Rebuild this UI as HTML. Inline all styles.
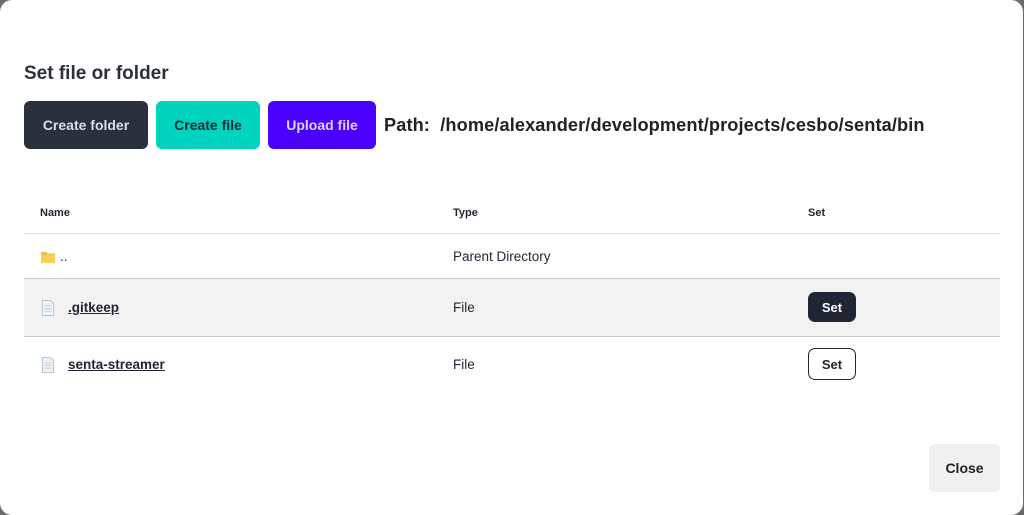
<!DOCTYPE html>
<html><head><style>
html,body{margin:0;padding:0;width:1024px;height:515px;background:#6b6b6b;overflow:hidden;font-family:"Liberation Sans",sans-serif;color:#1f2533}
.m{position:absolute;left:0;top:0;width:1023px;height:515px;background:#fff;border-radius:12px}
.t{position:absolute;left:24px;top:63px;font-size:19px;font-weight:bold;color:#2a2f3a}
.b{position:absolute;top:101px;height:48px;border-radius:6px;font-size:14px;font-weight:bold;display:flex;align-items:center;justify-content:center}
.p{position:absolute;left:384px;top:115px;font-size:18.2px;font-weight:bold;color:#222;white-space:nowrap;letter-spacing:0.1px}
.h{position:absolute;top:207px;font-size:11px;font-weight:bold}
.line{position:absolute;left:24px;width:976px;height:1px;background:#ddd}
.c{position:absolute;font-size:13.5px}
.u{position:absolute;left:68px;text-decoration:underline;font-weight:bold;white-space:nowrap}
.ic{position:absolute;left:40px}
.set{position:absolute;left:808px;width:48px;height:30px;border-radius:7px;font-size:13px;font-weight:bold;display:flex;align-items:center;justify-content:center}
</style></head><body>
<div class="m">
<div class="t">Set file or folder</div>
<div class="b" style="left:24px;width:124px;background:#2a303c;color:#dde;">Create folder</div>
<div class="b" style="left:156px;width:104px;background:#00d4bf;color:#0b2a33;">Create file</div>
<div class="b" style="left:268px;width:108px;background:#4a00ff;color:#ddd3ff;">Upload file</div>
<div class="p">Path:&nbsp; /home/alexander/development/projects/cesbo/senta/bin</div>
<div class="h" style="left:40px">Name</div>
<div class="h" style="left:453px">Type</div>
<div class="h" style="left:808px">Set</div>
<div class="line" style="top:233px"></div>
<svg class="ic" style="top:250px" width="16" height="14" viewBox="0 0 16 14"><path d="M1 2h5l1.5 1.5H15v9.5H1z" fill="#f0c040"/><path d="M1 5h14v8H1z" fill="#f7d25a"/></svg>
<div class="c" style="left:60px;top:249px">..</div>
<div class="c" style="left:453px;top:249px">Parent Directory</div>
<div style="position:absolute;left:24px;top:278px;width:976px;height:57px;background:#f2f2f2;border-top:1px solid #ccc;border-bottom:1px solid #ccc"></div>
<svg class="ic" style="top:300px" width="16" height="16" viewBox="0 0 16 16"><path d="M2.5 .5h8l3 3v12h-11z" fill="#eef3f8" stroke="#b8c6d4"/><path d="M5 6h6M5 8.5h6M5 11h6" stroke="#c3cfdb"/></svg>
<div class="c u" style="top:300px">.gitkeep</div>
<div class="c" style="left:453px;top:300px">File</div>
<div class="set" style="top:292px;background:#1f2533;color:#fff">Set</div>
<svg class="ic" style="top:357px" width="16" height="16" viewBox="0 0 16 16"><path d="M2.5 .5h8l3 3v12h-11z" fill="#eef3f8" stroke="#b8c6d4"/><path d="M5 6h6M5 8.5h6M5 11h6" stroke="#c3cfdb"/></svg>
<div class="c u" style="top:357px">senta-streamer</div>
<div class="c" style="left:453px;top:357px">File</div>
<div class="set" style="top:348px;border:1px solid #1f2533;box-sizing:border-box;height:32px">Set</div>
<div class="b" style="left:929px;top:444px;width:71px;background:#f0f0f0;color:#222">Close</div>
</div>
</body></html>
